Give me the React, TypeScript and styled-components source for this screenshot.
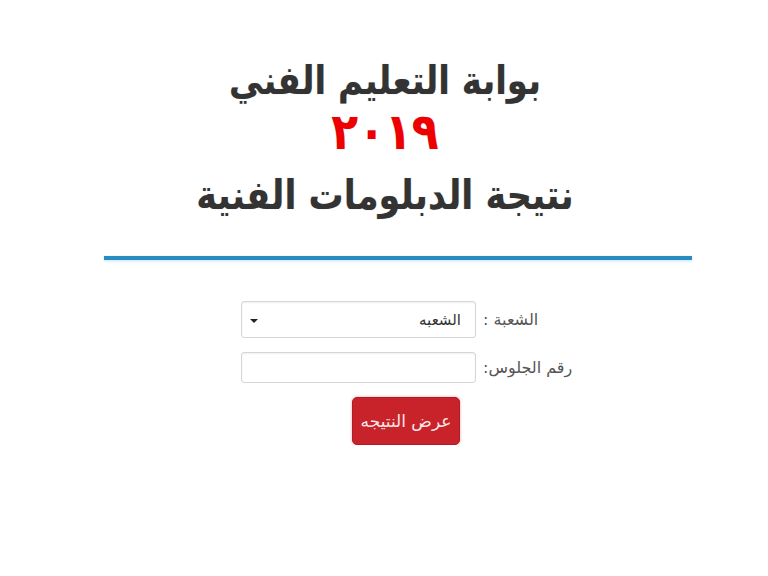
import styled, { createGlobalStyle } from 'styled-components';

const GlobalStyle = createGlobalStyle`
  html, body {
    margin: 0;
    padding: 0;
    background: #ffffff;
  }
  body {
    font-family: "DejaVu Sans", "Noto Sans", sans-serif;
  }
`;

const Page = styled.div`
  direction: rtl;
  width: 588px;
  margin-left: 104px;
  padding-top: 55px;
`;

const Header = styled.header`
  text-align: center;
  padding-right: 26px;
  color: #333333;
  font-family: "DejaVu Sans", sans-serif;
  font-weight: bold;
`;

const TitleLine = styled.h1<{ $size: number; $height: number; $red?: boolean }>`
  margin: 0;
  font-size: ${(p) => p.$size}px;
  line-height: ${(p) => p.$height}px;
  color: ${(p) => (p.$red ? '#ee0000' : '#333333')};
  text-shadow: 0 0 1px rgba(0, 0, 0, 0.25);
  transform: scaleY(1.15);
`;

const Divider = styled.hr`
  margin: 24px 0 0;
  border: 0;
  height: 4px;
  background: #2a8bc2;
  box-shadow: 0 0 1px #6fc0e6, 0 2px 3px rgba(120, 200, 230, 0.25);
`;

const Form = styled.form`
  display: grid;
  grid-template-columns: 95px 235px;
  column-gap: 7px;
  row-gap: 14px;
  margin: 41px 114px 0 0;
  width: 337px;
  font-family: "DejaVu Sans", sans-serif;
`;

const Label = styled.label`
  align-self: center;
  text-align: left;
  font-size: 16px;
  color: #555555;
  white-space: nowrap;
`;

const Field = styled.div`
  position: relative;
  height: 37px;
  box-sizing: border-box;
  border: 1px solid #d6d6d6;
  border-radius: 3px;
  box-shadow: inset 0 1px 2px rgba(0, 0, 0, 0.07);
  background: #fff;
  display: flex;
  align-items: center;
  padding: 0 14px;
  font-size: 15px;
  color: #333;
`;

const ShortField = styled(Field)`
  height: 31px;
`;

const Caret = styled.span`
  position: absolute;
  left: 8px;
  top: 17px;
  width: 0;
  height: 0;
  border-left: 4px solid transparent;
  border-right: 4px solid transparent;
  border-top: 4px solid #222;
`;

const ButtonRow = styled.div`
  grid-column: 1 / span 2;
  display: flex;
  justify-content: center;
  padding-right: 7px;
`;

const Submit = styled.button`
  width: 108px;
  height: 48px;
  border: 1px solid #b01c22;
  border-radius: 5px;
  background: #c8232b;
  color: #fbe7e7;
  font-family: "DejaVu Sans", sans-serif;
  font-size: 17px;
  box-shadow: 0 0 3px rgba(200, 35, 43, 0.4);
`;

export default function App() {
  return (
    <>
      <GlobalStyle />
      <Page>
        <Header>
          <TitleLine $size={34} $height={50}>بوابة التعليم الفني</TitleLine>
          <TitleLine $size={44} $height={53} $red>٢٠١٩</TitleLine>
          <TitleLine $size={35} $height={74}>نتيجة الدبلومات الفنية</TitleLine>
        </Header>
        <Divider />
        <Form>
          <Label>الشعبة :</Label>
          <Field>
            الشعبه
            <Caret />
          </Field>
          <Label>رقم الجلوس:</Label>
          <ShortField />
          <ButtonRow>
            <Submit type="button">عرض النتيجه</Submit>
          </ButtonRow>
        </Form>
      </Page>
    </>
  );
}
